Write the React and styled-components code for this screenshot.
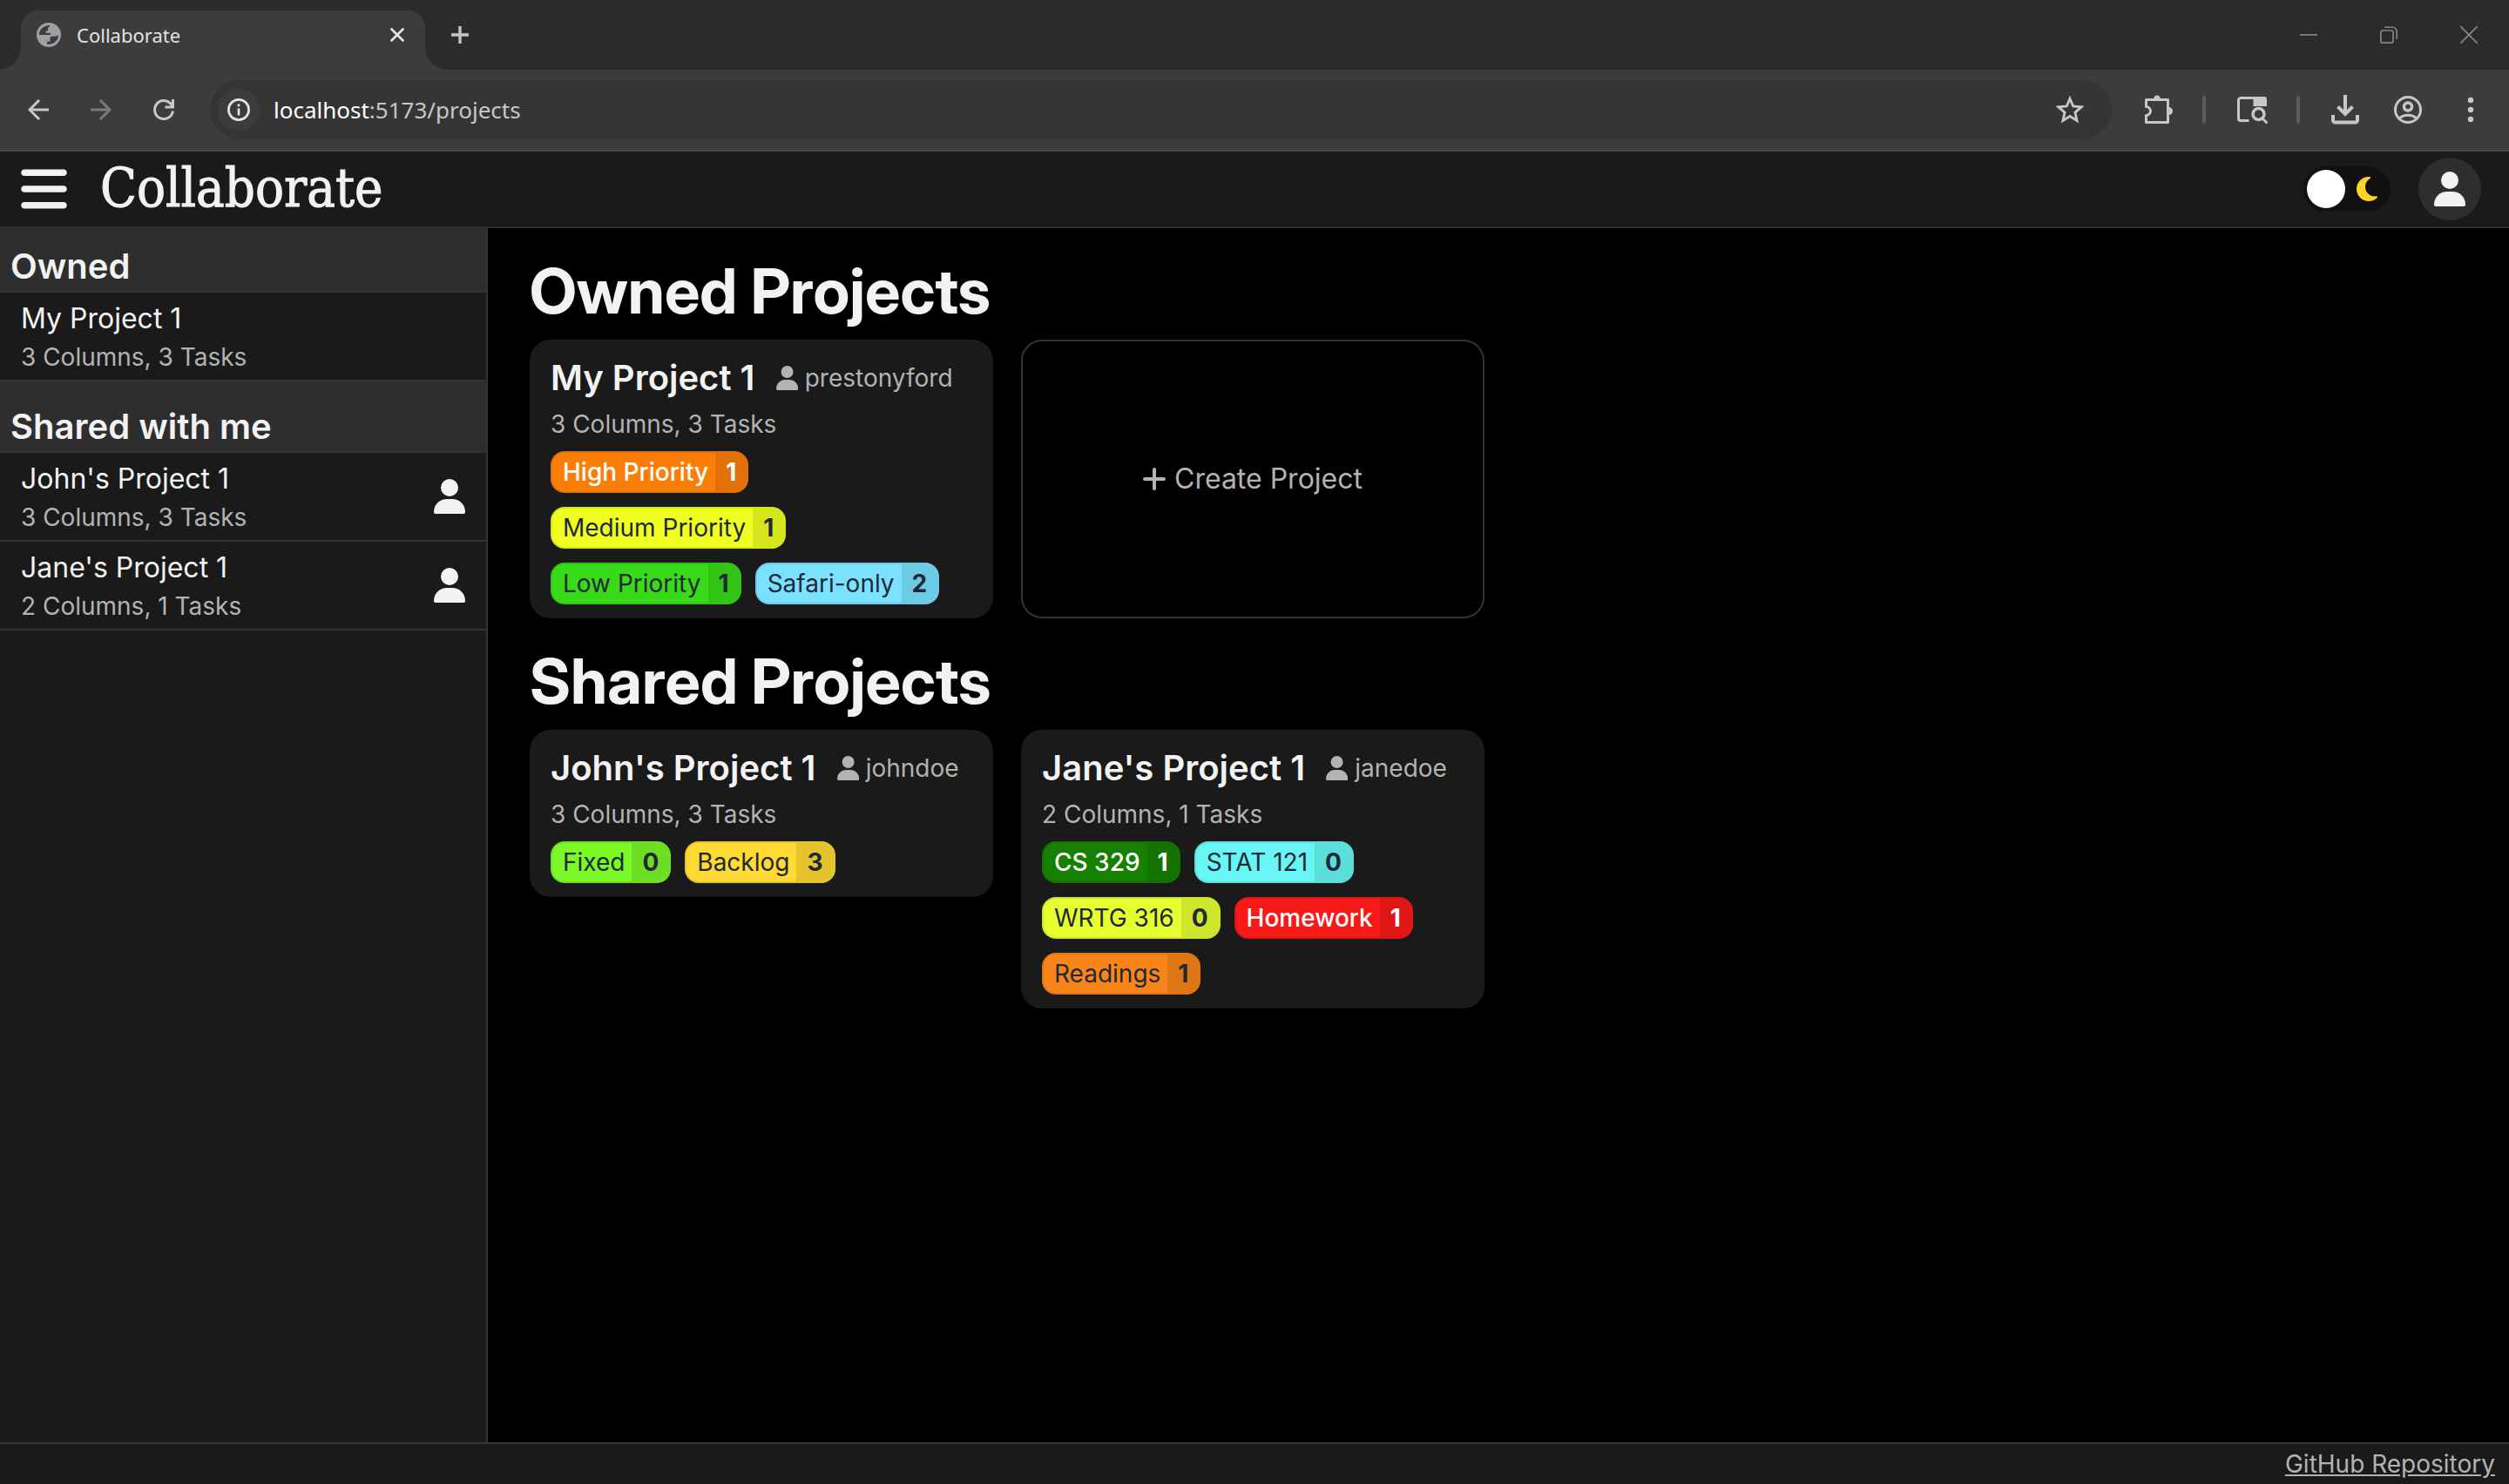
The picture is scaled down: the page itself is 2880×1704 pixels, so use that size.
import React from "react";
import styled, { createGlobalStyle } from "styled-components";

const Global = createGlobalStyle`
  *, *::before, *::after { box-sizing: border-box; }
  body { margin: 0; background: #000; }
  button, input { font: inherit; color: inherit; }
  h1, h2, h3, p, ul { margin: 0; padding: 0; }
  ul { list-style: none; }
`;

const sans = `Inter, "Liberation Sans", sans-serif`;
const display = `"Inter Display", Inter, "Liberation Sans", sans-serif`;
const chromeSans = `"Noto Sans", "Open Sans", sans-serif`;

const Window = styled.div`
  display: flex;
  flex-direction: column;
  min-height: 100vh;
  font-family: ${sans};
  color: #f2f2f2;
`;

const PlainButton = styled.button`
  display: flex;
  align-items: center;
  justify-content: center;
  flex: none;
  padding: 0;
  border: 0;
  background: none;
  color: inherit;
  cursor: pointer;
`;

/* Browser frame */

const TabStrip = styled.div`
  display: flex;
  align-items: flex-end;
  height: 80px;
  padding-left: 24px;
  background: #2b2b2b;
  font-family: ${chromeSans};
`;

const Tab = styled.div`
  position: relative;
  display: flex;
  align-items: center;
  width: 464px;
  height: 68px;
  padding: 0 24px 12px 18px;
  border-radius: 20px 20px 0 0;
  background: #3c3c3c;
  color: #e3e3e3;

  &::before,
  &::after {
    content: "";
    position: absolute;
    bottom: 0;
    width: 24px;
    height: 24px;
  }
  &::before {
    right: 100%;
    background: radial-gradient(circle at 0 0, transparent 23px, #3c3c3c 24px);
  }
  &::after {
    left: 100%;
    background: radial-gradient(circle at 100% 0, transparent 23px, #3c3c3c 24px);
  }
`;

const TabTitle = styled.span`
  flex: 1;
  padding-left: 18px;
  font-size: 22px;
  line-height: 32px;
`;

const NewTab = styled(PlainButton)`
  width: 80px;
  height: 80px;
  color: #c7c7c7;
`;

const WindowControls = styled.div`
  display: flex;
  margin-left: auto;
  color: #868686;
`;

const WindowButton = styled(PlainButton)`
  width: 92px;
  height: 80px;
`;

const Toolbar = styled.div`
  display: flex;
  align-items: center;
  height: 94px;
  padding: 0 8px;
  border-bottom: 2px solid #474747;
  background: #3c3c3c;
  color: #c7c7c7;
`;

const ToolButton = styled(PlainButton)`
  width: ${(p) => p.$width || 72}px;
  height: 68px;
  opacity: ${(p) => (p.$dim ? 0.45 : 1)};
`;

const Address = styled.div`
  display: flex;
  align-items: center;
  flex: 1;
  height: 68px;
  margin: 0 22px 0 17px;
  padding: 0 12px 0 9px;
  border-radius: 34px;
  background: #353535;
`;

const SiteInfo = styled(PlainButton)`
  width: 48px;
  height: 48px;
  border-radius: 50%;
  background: #3c3c3c;
  color: #e3e3e3;
`;

const Url = styled.div`
  flex: 1;
  padding-left: 16px;
  font-family: ${chromeSans};
  font-size: 26px;
  line-height: 40px;
  color: #c7c7c7;
`;

const Host = styled.span`
  color: #fff;
`;

const Divider = styled.span`
  width: 4px;
  height: 32px;
  border-radius: 2px;
  background: #5c5c5c;
`;

/* Application */

const Header = styled.header`
  display: flex;
  align-items: center;
  height: 88px;
  padding: 0 32px 0 24px;
  border-bottom: 2px solid #2e2e2e;
  background: #1a1a1a;
`;

const Brand = styled.h1`
  flex: 1;
  padding: 0 0 2px 38px;
  font-family: "DejaVu Serif Condensed", "DejaVu Serif", serif;
  font-size: 61px;
  font-weight: 400;
  line-height: 72px;
  -webkit-text-stroke: 1px currentColor;
`;

const Toggle = styled.label`
  display: flex;
  align-items: center;
  width: 100px;
  height: 52px;
  margin-right: 32px;
  padding: 0 14px 0 4px;
  border-radius: 26px;
  background: #111;
  color: #ffd32a;
  cursor: pointer;
`;

const Knob = styled.input`
  appearance: none;
  width: 44px;
  height: 44px;
  margin: 0 auto 0 0;
  border-radius: 50%;
  background: #fff;
`;

const Avatar = styled(PlainButton)`
  width: 72px;
  height: 72px;
  border-radius: 50%;
  background: #2e2e2e;
`;

const Body = styled.div`
  display: flex;
  flex: 1;
`;

const Sidebar = styled.nav`
  width: 560px;
  border-right: 2px solid #333;
  background: #1a1a1a;
`;

const SideHeading = styled.h2`
  padding: ${(p) => (p.$first ? 16 : 24)}px 12px 0;
  border-bottom: 2px solid #333;
  background: #2e2e2e;
  font-size: 40px;
  font-weight: 600;
  line-height: 56px;
`;

const SideItem = styled.a`
  display: flex;
  align-items: center;
  justify-content: space-between;
  padding: 6px 24px;
  border-bottom: 2px solid #333;
  color: inherit;
  text-decoration: none;
`;

const SideTitle = styled.h3`
  font-size: 32px;
  font-weight: 400;
  line-height: 48px;
`;

const Meta = styled.p`
  color: #b3b3b3;
  font-size: 28px;
  line-height: 40px;
`;

const Main = styled.main`
  flex: 1;
  padding: 32px 48px;
  background: #000;
`;

const Section = styled.section`
  margin-bottom: 32px;
`;

const SectionTitle = styled.h2`
  margin-bottom: 16px;
  font-family: ${display};
  font-size: 72px;
  font-weight: 700;
  line-height: 80px;
`;

const Grid = styled.div`
  display: grid;
  grid-template-columns: repeat(auto-fill, 532px);
  align-items: start;
  gap: 32px;
`;

const Card = styled.article`
  padding: 16px 24px;
  border-radius: 24px;
  background: #1a1a1a;
`;

const CardHead = styled.div`
  display: flex;
  align-items: center;
  gap: 24px;
  margin-bottom: 5px;
`;

const CardTitle = styled.h3`
  font-size: 40px;
  font-weight: 600;
  line-height: 56px;
`;

const Owner = styled.span`
  display: flex;
  align-items: center;
  gap: 8px;
  color: #b3b3b3;
  font-size: 28px;
  line-height: 40px;
`;

const Tags = styled.ul`
  display: flex;
  flex-wrap: wrap;
  gap: 16px;
  margin-top: 11px;
`;

const Tag = styled.li`
  display: flex;
  overflow: hidden;
  height: 48px;
  border: 2px solid rgba(0, 0, 0, 0.1);
  border-radius: 16px;
  background: ${(p) => p.$color} border-box;
  color: ${(p) => (p.$light ? "#fff" : "#1f2937")};
  font-size: 28px;
  font-weight: ${(p) => (p.$light ? 500 : 400)};
  line-height: 44px;
`;

const TagName = styled.span`
  padding: 0 8px 0 12px;
`;

const TagCount = styled.span`
  padding: 0 12px;
  background: rgba(0, 0, 0, 0.1);
  font-weight: 700;
`;

const CreateCard = styled(PlainButton)`
  align-self: stretch;
  gap: 10px;
  border: 2px solid #333;
  border-radius: 24px;
  color: #b3b3b3;
  font-size: 32px;
  line-height: 48px;
`;

const Footer = styled.footer`
  display: flex;
  justify-content: flex-end;
  height: 48px;
  padding: 3px 16px 0;
  border-top: 2px solid #333;
  background: #1a1a1a;
`;

const RepoLink = styled.a`
  color: #b3b3b3;
  font-size: 28px;
  line-height: 40px;
`;

/* Icons */

const Stroke = ({ size, width = 2, children }) => (
  <svg width={size} height={size} viewBox="0 0 24 24" fill="none" stroke="currentColor" strokeWidth={width} aria-hidden="true">
    {children}
  </svg>
);

const UserIcon = ({ height }) => (
  <svg height={height} viewBox="0 0 36 40" fill="currentColor" aria-hidden="true">
    <circle cx="18" cy="10" r="10" />
    <path d="M0 38C0 29 7 23 15 23h6c8 0 15 6 15 15 0 1.300-.7 2-2 2H2c-1.300 0-2-.7-2-2z" />
  </svg>
);

const GlobeIcon = () => (
  <svg width="28" height="28" viewBox="0 0 28 28" aria-hidden="true">
    <circle cx="14" cy="14" r="14" fill="#9aa0a6" />
    <path d="M3 14C3 8 7.500 3.500 15.500 3c0 1.500-2.500 2-2.500 4v2.500h-2.500V12H16v2h-2.500z" fill="#3c3c3c" />
    <path d="M25 14.500C25 20 20.500 25 12 25v-3.300h3.500v-3.500c0-1.800 1-2.500 2.800-2.500 3 0 5-.3 6.700-1.200z" fill="#3c3c3c" />
    <path d="M2.500 14h6c4 0 5.500 2 5.500 4.500H9.500V24C5.500 22 2.500 18.500 2.500 14z" fill="#9aa0a6" />
  </svg>
);

const projects = {
  owned: [
    {
      name: "My Project 1",
      owner: "prestonyford",
      meta: "3 Columns, 3 Tasks",
      tags: [
        ["High Priority", 1, "#fb7e09", true],
        ["Medium Priority", 1, "#efff20"],
        ["Low Priority", 1, "#37db17"],
        ["Safari-only", 2, "#7ae1ff"],
      ],
    },
  ],
  shared: [
    {
      name: "John's Project 1",
      owner: "johndoe",
      meta: "3 Columns, 3 Tasks",
      tags: [
        ["Fixed", 0, "#7bf826"],
        ["Backlog", 3, "#ffda33"],
      ],
    },
    {
      name: "Jane's Project 1",
      owner: "janedoe",
      meta: "2 Columns, 1 Tasks",
      tags: [
        ["CS 329", 1, "#178000", true],
        ["STAT 121", 0, "#67f6f3"],
        ["WRTG 316", 0, "#e5ff2f"],
        ["Homework", 1, "#fa1919", true],
        ["Readings", 1, "#f98419"],
      ],
    },
  ],
};

const ProjectCard = ({ project }) => (
  <Card>
    <CardHead>
      <CardTitle>{project.name}</CardTitle>
      <Owner>
        <UserIcon height={28} />
        {project.owner}
      </Owner>
    </CardHead>
    <Meta>{project.meta}</Meta>
    <Tags>
      {project.tags.map(([name, count, color, light]) => (
        <Tag key={name} $color={color} $light={light}>
          <TagName>{name}</TagName>
          <TagCount>{count}</TagCount>
        </Tag>
      ))}
    </Tags>
  </Card>
);

const SideProject = ({ project, shared }) => (
  <SideItem href="#project">
    <div>
      <SideTitle>{project.name}</SideTitle>
      <Meta>{project.meta}</Meta>
    </div>
    {shared && <UserIcon height={40} />}
  </SideItem>
);

export default function App() {
  return (
    <Window>
      <Global />
      <TabStrip>
        <Tab>
          <GlobeIcon />
          <TabTitle>Collaborate</TabTitle>
          <PlainButton aria-label="Close tab">
            <Stroke size={16} width={4}>
              <path d="M1 1l22 22M23 1L1 23" />
            </Stroke>
          </PlainButton>
        </Tab>
        <NewTab aria-label="New tab">
          <Stroke size={20} width={4}>
            <path d="M12 0v24M0 12h24" />
          </Stroke>
        </NewTab>
        <WindowControls>
          <WindowButton aria-label="Minimize">
            <Stroke size={20}>
              <path d="M0 12h24" />
            </Stroke>
          </WindowButton>
          <WindowButton aria-label="Restore">
            <Stroke size={20}>
              <rect x="1" y="6" width="17" height="17" rx="3" />
              <path d="M6 1.500h11a6 6 0 0 1 6 6V18" />
            </Stroke>
          </WindowButton>
          <WindowButton aria-label="Close">
            <Stroke size={20}>
              <path d="M0 0l24 24M24 0L0 24" />
            </Stroke>
          </WindowButton>
        </WindowControls>
      </TabStrip>

      <Toolbar>
        <ToolButton aria-label="Back">
          <Stroke size={24} width={3}>
            <path d="M24 12H2M13 1L2 12l11 11" />
          </Stroke>
        </ToolButton>
        <ToolButton aria-label="Forward" $dim>
          <Stroke size={24} width={3}>
            <path d="M0 12h22M11 1l11 11-11 11" />
          </Stroke>
        </ToolButton>
        <ToolButton aria-label="Reload">
          <Stroke size={24} width={3}>
            <path d="M22.500 13.500A10.500 10.500 0 1 1 19.500 4.600L22 8M22.500 0v9H13.500" />
          </Stroke>
        </ToolButton>
        <Address>
          <SiteInfo aria-label="Site information">
            <Stroke size={26} width={2.5}>
              <circle cx="12" cy="12" r="10.700" />
              <path d="M12 10.500v7.500M12 6v2.600" />
            </Stroke>
          </SiteInfo>
          <Url>
            <Host>localhost</Host>:5173/projects
          </Url>
          <ToolButton aria-label="Bookmark">
            <Stroke size={34} width={2}>
              <path d="M12 3l2.600 6.200 6.700.600-5.100 4.400 1.500 6.600L12 17.300l-5.700 3.500 1.500-6.600-5.100-4.400 6.700-.600z" />
            </Stroke>
          </ToolButton>
        </Address>
        <ToolButton aria-label="Extensions" $width={64}>
          <svg width="32" height="34" viewBox="0 0 32 34" fill="none" aria-hidden="true">
            <path d="M1.500 5.500h25v26h-25v-8a5 5 0 0 0 0-10z" stroke="currentColor" strokeWidth="3" strokeLinejoin="round" />
            <path d="M10 5a4 4.500 0 0 1 8 0zM27.500 14a4.500 4.500 0 0 1 0 9z" fill="currentColor" />
          </svg>
        </ToolButton>
        <ToolButton as="span" $width={40}>
          <Divider />
        </ToolButton>
        <ToolButton aria-label="Side search" $width={70}>
          <svg width="36" height="34" viewBox="0 0 36 34" fill="none" stroke="currentColor" strokeWidth="3" aria-hidden="true">
            <path d="M14.500 29.500H5a2.500 2.500 0 0 1-2.500-2.500V6A2.500 2.500 0 0 1 5 3.500h15" />
            <path d="M19.500 2H32a3 3 0 0 1 3 3v8H19.500z" fill="currentColor" stroke="none" />
            <circle cx="25.500" cy="22" r="6.500" strokeWidth="3.500" />
            <path d="M29.500 26.500l6 6" />
          </svg>
        </ToolButton>
        <ToolButton as="span" $width={36}>
          <Divider />
        </ToolButton>
        <ToolButton aria-label="Downloads">
          <svg width="32" height="34" viewBox="0 0 32 34" fill="none" stroke="currentColor" strokeWidth="4" aria-hidden="true">
            <path d="M16 0v22M7.500 13.500L16 22l8.500-8.500M2 23v6a2.500 2.500 0 0 0 2.500 2.500h23A2.500 2.500 0 0 0 30 29v-6" />
          </svg>
        </ToolButton>
        <ToolButton aria-label="Profile">
          <svg width="34" height="34" viewBox="0 0 34 34" fill="none" stroke="currentColor" strokeWidth="3" aria-hidden="true">
            <circle cx="17" cy="17" r="14.500" />
            <circle cx="17" cy="13.500" r="4.500" strokeWidth="3.500" />
            <path d="M7 27c5.500-5 14.500-5 20 0" />
          </svg>
        </ToolButton>
        <ToolButton aria-label="Menu">
          <svg width="8" height="32" viewBox="0 0 8 32" fill="currentColor" aria-hidden="true">
            <circle cx="4" cy="5" r="3.200" />
            <circle cx="4" cy="16" r="3.200" />
            <circle cx="4" cy="27" r="3.200" />
          </svg>
        </ToolButton>
      </Toolbar>

      <Header>
        <PlainButton aria-label="Toggle sidebar">
          <svg width="53" height="60" viewBox="0 0 448 512" fill="currentColor" aria-hidden="true">
            <path d="M0 96C0 78.300 14.300 64 32 64h384c17.700 0 32 14.300 32 32s-14.300 32-32 32H32C14.300 128 0 113.700 0 96zm0 160c0-17.700 14.300-32 32-32h384c17.700 0 32 14.300 32 32s-14.300 32-32 32H32c-17.700 0-32-14.300-32-32zm448 160c0 17.700-14.300 32-32 32H32c-17.700 0-32-14.300-32-32s14.300-32 32-32h384c17.700 0 32 14.300 32 32z" />
          </svg>
        </PlainButton>
        <Brand>Collaborate</Brand>
        <Toggle>
          <Knob type="checkbox" role="switch" aria-label="Light mode" />
          <svg width="26" height="28" viewBox="0 32 384 448" fill="currentColor" aria-hidden="true">
            <path d="M223.500 32C100 32 0 132.300 0 256s100 224 223.500 224c60.600 0 115.500-24.200 155.800-63.400 5-4.900 6.300-12.500 3.100-18.700s-10.100-9.700-17-8.500c-9.800 1.700-19.800 2.600-30.100 2.600-96.900 0-175.500-78.800-175.500-176 0-65.800 36-123.100 89.300-153.300 6.100-3.500 9.200-10.500 7.700-17.300s-7.300-11.900-14.300-12.500c-6.300-.500-12.600-.800-19-.800z" />
          </svg>
        </Toggle>
        <Avatar aria-label="Account">
          <UserIcon height={40} />
        </Avatar>
      </Header>

      <Body>
        <Sidebar>
          <SideHeading $first>Owned</SideHeading>
          {projects.owned.map((p) => (
            <SideProject key={p.name} project={p} />
          ))}
          <SideHeading>Shared with me</SideHeading>
          {projects.shared.map((p) => (
            <SideProject key={p.name} project={p} shared />
          ))}
        </Sidebar>
        <Main>
          <Section>
            <SectionTitle>Owned Projects</SectionTitle>
            <Grid>
              {projects.owned.map((p) => (
                <ProjectCard key={p.name} project={p} />
              ))}
              <CreateCard>
                <svg width="26" height="26" viewBox="0 0 26 26" stroke="currentColor" strokeWidth="4" strokeLinecap="round" aria-hidden="true">
                  <path d="M13 2v22M2 13h22" />
                </svg>
                Create Project
              </CreateCard>
            </Grid>
          </Section>
          <Section>
            <SectionTitle>Shared Projects</SectionTitle>
            <Grid>
              {projects.shared.map((p) => (
                <ProjectCard key={p.name} project={p} />
              ))}
            </Grid>
          </Section>
        </Main>
      </Body>
      <Footer>
        <RepoLink href="#repository">GitHub Repository</RepoLink>
      </Footer>
    </Window>
  );
}
